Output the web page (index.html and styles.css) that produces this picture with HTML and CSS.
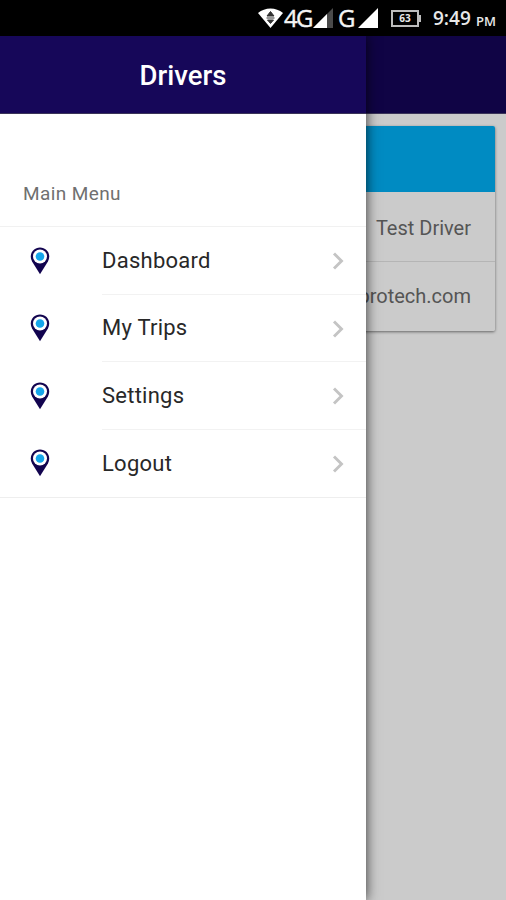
FILE: index.html
```html
<!DOCTYPE html>
<html lang="en">
<head>
<meta charset="utf-8">
<title>Drivers</title>
<link rel="stylesheet" href="styles.css">
</head>
<body>
<svg class="defs" aria-hidden="true">
  <symbol id="pin" viewBox="0 0 20 28">
    <path d="M10 .6C4.800.6.8 4.500.8 9.500c0 2.400.8 4.200 2.200 6.600L10 27.300l7-11.200c1.400-2.400 2.200-4.200 2.200-6.600C19.200 4.500 15.200.6 10 .6z" fill="#12044f"/>
    <circle cx="10" cy="9.500" r="7" fill="#fff"/>
    <circle cx="10" cy="9.500" r="4.300" fill="#16a6ea"/>
  </symbol>
  <symbol id="chevron" viewBox="0 0 12 18">
    <path d="M2 1.500 9.500 9 2 16.500" fill="none" stroke="#c4c4c4" stroke-width="2.900"/>
  </symbol>
</svg>
<div class="status">
  <svg class="wifi" viewBox="0 0 25 20"><path d="M0 5C7-1 18-1 25 5L12.500 20z" fill="#fff"/><path d="M12.500 3.500 16 8H9zM12.500 15.500 9.500 12h6zM8.500 10h8" fill="#333" stroke="#333"/></svg>
  <span class="net net-4g">4G</span>
  <svg class="signal" viewBox="0 0 20 20"><path d="M0 20 20 0v20z" fill="#4a4a4a"/><path d="M0 20 14 6v14z" fill="#fff"/></svg>
  <span class="net net-g">G</span>
  <svg class="signal signal-full" viewBox="0 0 20 20"><path d="M0 20 20 0v20z" fill="#fff"/></svg>
  <span class="battery">63</span>
  <span class="clock">9:49</span><span class="pm">PM</span>
</div>
<div class="app">
  <div class="page">
    <header class="bar"></header>
    <section class="card">
      <div class="card-head"></div>
      <div class="card-row">Test Driver</div>
      <div class="card-row">protech.com</div>
    </section>
  </div>
  <nav class="drawer">
    <header class="bar drawer-bar">Drivers</header>
    <div class="menu-title">Main Menu</div>
    <ul class="menu">
      <li><svg class="pin"><use href="#pin"/></svg><a class="item"><span>Dashboard</span><svg class="chevron"><use href="#chevron"/></svg></a></li>
      <li><svg class="pin"><use href="#pin"/></svg><a class="item"><span>My Trips</span><svg class="chevron"><use href="#chevron"/></svg></a></li>
      <li><svg class="pin"><use href="#pin"/></svg><a class="item"><span>Settings</span><svg class="chevron"><use href="#chevron"/></svg></a></li>
      <li><svg class="pin"><use href="#pin"/></svg><a class="item"><span>Logout</span><svg class="chevron"><use href="#chevron"/></svg></a></li>
    </ul>
  </nav>
</div>
</body>
</html>
```
FILE: styles.css
```css
* { box-sizing: border-box; }
body { margin: 0; height: 900px; overflow: hidden; font-family: Roboto, sans-serif; background: #cbcbcb; }
.defs { position: absolute; width: 0; height: 0; }

.status { display: flex; align-items: center; justify-content: flex-end; height: 36px; padding-right: 10px; background: #000; color: #e8e8e8; white-space: nowrap; }
.status > * { flex: none; }
.wifi { width: 25px; height: 20px; }
.net { color: #f4f4f4; font-family: "Open Sans", sans-serif; font-size: 24px; line-height: 36px; -webkit-text-stroke: .4px #f4f4f4; }
.net-4g { width: 28px; margin-left: 1px; letter-spacing: -1.800px; }
.net-g { width: 18px; margin-left: 5px; }
.signal { width: 20px; height: 20px; margin-left: 1px; }
.signal-full { margin-left: 2px; }
.battery { position: relative; width: 28px; height: 17px; margin-left: 13px; border: 2px solid #bdbdbd; font: bold 10px/13px "Open Sans", sans-serif; text-align: center; }
.battery::after { content: ""; position: absolute; right: -4px; top: 3px; width: 2px; height: 7px; background: #bdbdbd; }
.clock { width: 39px; margin-left: 14px; font: 600 19px/36px "Open Sans", sans-serif; }
.pm { width: 20px; margin: 5px 0 0 4px; font: 600 13px/30px "Open Sans", sans-serif; }

.app { position: relative; height: 864px; }
.page { height: 100%; background: #cbcbcb; }
.bar { height: 78px; background: #100445; border-bottom: 1px solid #3a3458; }
.card { margin: 12px 11px 0; border-radius: 2px; overflow: hidden; box-shadow: 0 1px 3px rgba(0, 0, 0, .5); color: #555; font-size: 20px; text-align: right; }
.card-head { height: 66px; background: #008bc2; }
.card-row { height: 69px; padding-right: 24px; line-height: 73px; background: #cbcbcb; }
.card-row + .card-row { height: 70px; line-height: 68px; border-top: 1px solid #b5b5b5; }

.drawer { position: absolute; top: 0; left: 0; width: 366px; height: 100%; background: #fff; box-shadow: 0 0 12px rgba(0, 0, 0, .75); clip-path: inset(0 -24px 0 0); }
.drawer-bar { background: #160759; color: #fff; font-size: 27.500px; font-weight: 500; line-height: 79px; text-align: center; }
.menu-title { height: 113px; padding: 67px 0 0 23px; border-bottom: 1px solid #f1f1f1; color: #707070; font-size: 19px; line-height: 26px; letter-spacing: .4px; }
.menu { margin: 0; padding: 0; list-style: none; border-bottom: 1px solid #eee; }
.menu li { display: flex; align-items: center; height: 67.500px; }
.pin { flex: none; width: 20px; height: 28px; margin: 0 42px 0 30px; }
.item { display: flex; flex: 1; align-items: center; justify-content: space-between; height: 100%; margin-left: 10px; padding-right: 22px; border-bottom: 1px solid #f2f2f2; color: #282828; font-size: 22px; letter-spacing: .25px; }
.menu li:last-child .item { border-bottom: 0; }
.chevron { width: 12px; height: 18px; margin-top: 2px; }
```
